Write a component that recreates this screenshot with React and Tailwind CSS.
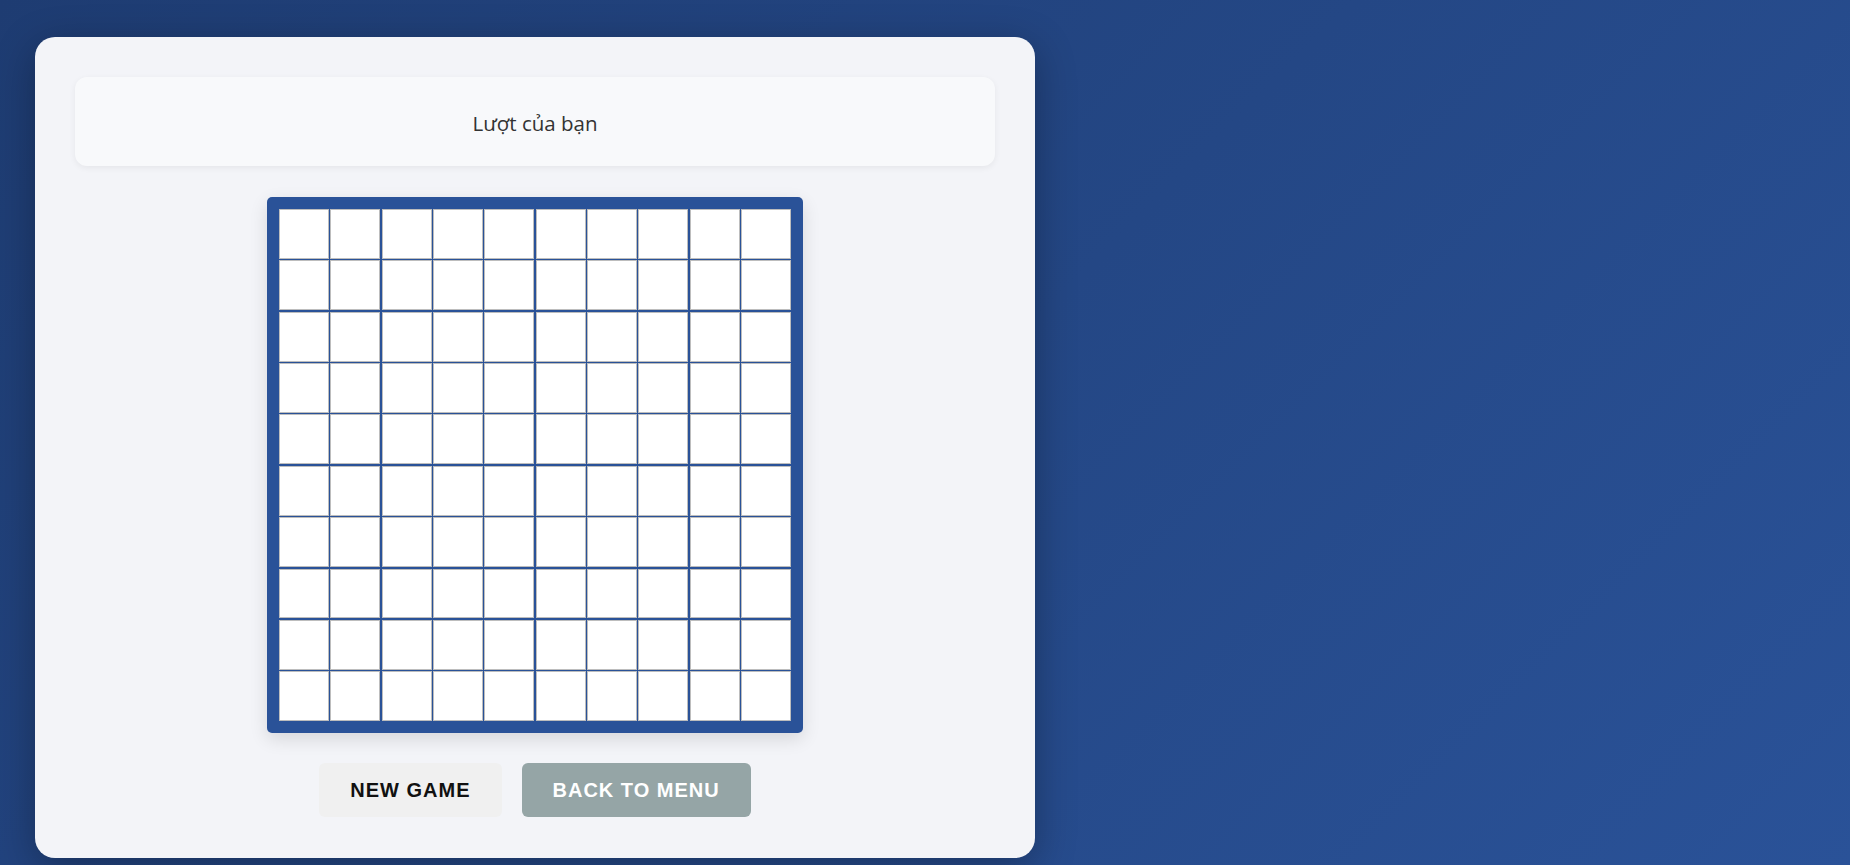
import { useState } from 'react'

const SIZE = 10

export default function App() {
  const [board, setBoard] = useState(() => Array(SIZE * SIZE).fill(null))

  const reset = () => setBoard(Array(SIZE * SIZE).fill(null))

  return (
    <div className="min-h-screen bg-[linear-gradient(135deg,#1e3c72_0%,#2a5298_100%)] pl-[35px] pt-[37px] pb-[7px]">
      <div className="w-[1000px] rounded-[20px] bg-[#f3f4f8] px-[40px] pt-[40px] pb-[41px] shadow-[0_10px_40px_rgba(0,0,0,0.3)]">
        <div className="flex h-[89px] items-center justify-center rounded-[12px] bg-[#f8f9fb] pt-[3px] shadow-[0_2px_6px_rgba(0,0,0,0.06)]">
          <p className="text-[20.5px] text-[#333] font-['Open_Sans','Noto_Sans',sans-serif]">Lượt của bạn</p>
        </div>

        <div className="mt-[31px] flex justify-center">
          <div className="rounded-[5px] bg-[#2a5298] p-[12px] shadow-[0_6px_18px_rgba(0,0,0,0.12)]">
            <div className="grid w-[512px] grid-cols-10 gap-[1.5px]">
              {board.map((v, i) => (
                <button
                  key={i}
                  onClick={() => setBoard((b) => b.map((c, j) => (j === i && !c ? 'X' : c)))}
                  className="aspect-square border border-[#bdbdbd] bg-white text-xl font-bold text-[#2a5298]"
                >
                  {v}
                </button>
              ))}
            </div>
          </div>
        </div>

        <div className="mt-[30px] flex justify-center gap-[20px] font-['Liberation_Sans',Arial,sans-serif]">
          <button onClick={reset} className="h-[54px] rounded-[6px] bg-[#f0f0f0] px-[31px] text-[20px] font-bold uppercase tracking-[1px] text-[#111]">
            New Game
          </button>
          <button className="h-[54px] rounded-[6px] bg-[#95a5a6] px-[31px] text-[20px] font-bold uppercase tracking-[1px] text-white">
            Back to Menu
          </button>
        </div>
      </div>
    </div>
  )
}
